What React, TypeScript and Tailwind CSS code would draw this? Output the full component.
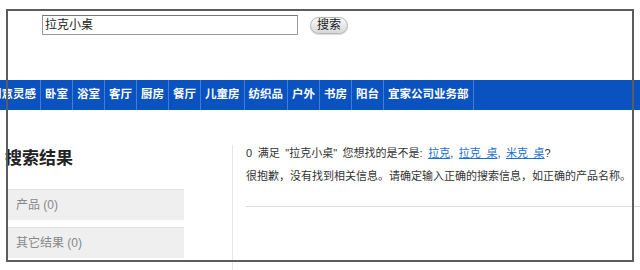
import React from "react";

const navItems = ["创意灵感", "卧室", "浴室", "客厅", "厨房", "餐厅", "儿童房", "纺织品", "户外", "书房", "阳台", "宜家公司业务部"];

export default function App() {
  return (
    <div
      className="relative w-[640px] h-[270px] bg-white overflow-hidden"
      style={{ fontFamily: '"Liberation Sans", "Noto Sans CJK SC", sans-serif' }}
    >
      {/* search row */}
      <div className="flex items-center pt-[15px] pl-[42px]">
        <div className="w-[256px] h-[20px] border border-[#9a9a9a] border-t-[#777] bg-white flex items-center pl-[2px] text-[12px] text-[#222] leading-none">
          拉克小桌
        </div>
        <button className="ml-[12px] w-[38px] h-[17px] rounded-full border border-[#b5b5b5] bg-gradient-to-b from-[#f8f8f8] to-[#d8d8d8] text-[12px] leading-none text-[#222] flex items-center justify-center shadow-[0_1px_1px_rgba(0,0,0,0.15)]">
          搜索
        </button>
      </div>

      {/* nav */}
      <div className="mt-[45px] h-[30px] bg-[#0a52bf] flex items-stretch">
        <div className="flex items-stretch -ml-[14px]">
          {navItems.map((t) => (
            <div
              key={t}
              className="flex items-center px-[4px] border-r border-[#3f7fd6] text-white font-bold text-[11.5px] leading-none"
            >
              {t}
            </div>
          ))}
        </div>
      </div>

      {/* content */}
      <div className="flex">
        <div className="w-[232px] shrink-0 pt-[37px]">
          <h2 className="pl-[5px] text-[17px] font-bold text-[#222] leading-[24px]">搜索结果</h2>
          <div className="mt-[18px] ml-[7px] w-[177px] flex flex-col gap-[7px]">
            <div className="h-[31px] bg-[#efefef] border-t border-[#e2e2e2] flex items-center pl-[9px] text-[12px] text-[#888]">
              产品 (0)
            </div>
            <div className="h-[31px] bg-[#efefef] border-t border-[#e2e2e2] flex items-center pl-[9px] text-[12px] text-[#888]">
              其它结果 (0)
            </div>
          </div>
        </div>
        <div className="flex-1 mt-[35px] border-l border-[#e6e6e6] h-[140px]">
          <div className="pl-[13px] pt-0 text-[11px] text-[#333] leading-[16px] whitespace-nowrap [word-spacing:2.5px]">
            0 满足 "拉克小桌" 您想找的是不是:{" "}
            <a className="text-[#1a6fd0] underline">拉克</a>,{" "}
            <a className="text-[#1a6fd0] underline">拉克 桌</a>,{" "}
            <a className="text-[#1a6fd0] underline">米克 桌</a>?
          </div>
          <div className="pl-[13px] mt-[7px] text-[11px] text-[#333] leading-[16px] whitespace-nowrap">
            很抱歉，没有找到相关信息。请确定输入正确的搜索信息，如正确的产品名称。
          </div>
          <div className="ml-[13px] mt-[22px] border-t border-[#dcdcdc]" />
        </div>
      </div>

      {/* frame overlay */}
      <div className="absolute left-[6px] top-[9px] w-[628px] h-[253px] border-2 border-[#5c5c5c] pointer-events-none" />
    </div>
  );
}
